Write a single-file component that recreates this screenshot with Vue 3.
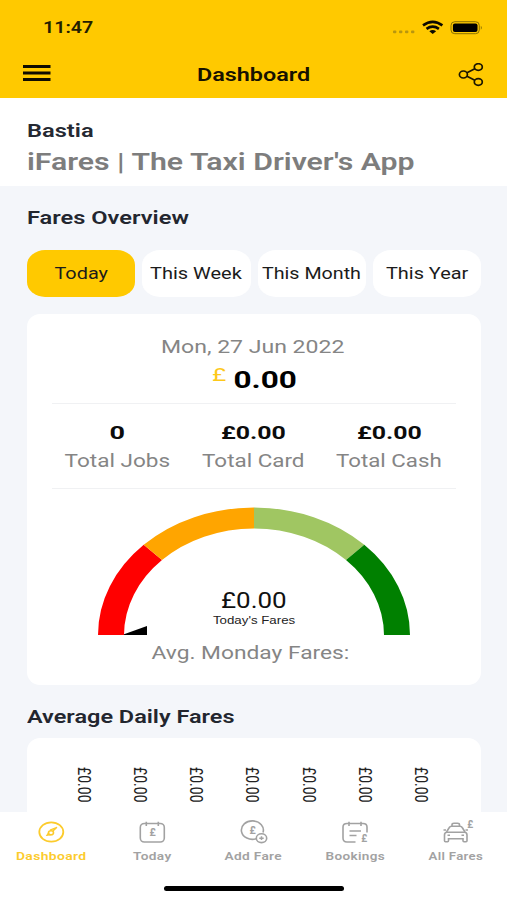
<script setup>
// Stretches a label along one axis so that it fills its design width.
const vFit = {
  mounted(el, { value, modifiers }) {
    if (modifiers.y) el.style.transform = `scaleY(${value / el.offsetHeight})`
    else el.style.transform = `scaleX(${value / el.offsetWidth})`
  },
}

const tabs = [
  { label: 'Today', width: 53, active: true },
  { label: 'This Week', width: 92 },
  { label: 'This Month', width: 99 },
  { label: 'This Year', width: 82 },
]

const totals = [
  { value: '0', label: 'Total Jobs', vw: 15, lw: 106 },
  { value: '£0.00', label: 'Total Card', vw: 65, lw: 103 },
  { value: '£0.00', label: 'Total Cash', vw: 65, lw: 106 },
]

const days = Array(7).fill('£0.00')

const nav = [
  { id: 'dashboard', label: 'Dashboard', width: 70, active: true },
  { id: 'today', label: 'Today', width: 38 },
  { id: 'add', label: 'Add Fare', width: 57 },
  { id: 'bookings', label: 'Bookings', width: 60 },
  { id: 'all', label: 'All Fares', width: 55 },
]
</script>

<template>
  <div class="screen">
    <header class="header">
      <div class="status">
        <span v-fit="50" class="t clock">11:47</span>
        <svg class="signals" width="92" height="16" viewBox="0 0 92 16">
          <g fill="#b8960f">
            <rect x="2" y="10.5" width="3.4" height="2.8" rx="1" />
            <rect x="8" y="10.5" width="3.4" height="2.8" rx="1" />
            <rect x="14" y="10.5" width="3.4" height="2.8" rx="1" />
            <rect x="20" y="10.5" width="3.4" height="2.8" rx="1" />
          </g>
          <g fill="none" stroke="#0c0a00" stroke-width="2.6">
            <path d="M32 5.400Q41.700 -1.700 51.400 5.400" />
            <path d="M35.500 8.900Q41.700 4.500 47.900 8.900" />
          </g>
          <path d="M38.300 11.200Q41.700 8.800 45.100 11.200L41.700 14Z" fill="#0c0a00" />
          <rect x="60" y="1.700" width="28.300" height="12" rx="3.800" fill="none" stroke="#8a7000" />
          <rect x="61.900" y="3.400" width="24.600" height="8.700" rx="2" fill="#000" />
          <path d="M89.800 5.700Q91.800 7.700 89.800 9.700Z" fill="#8a7000" />
        </svg>
      </div>
      <div class="titlebar">
        <svg class="menu" width="28" height="18" viewBox="0 0 28 18">
          <path d="M0 2.500H27.500M0 9H27.500M0 15.500H27.500" stroke="#0f0c00" stroke-width="3" />
        </svg>
        <h1 v-fit="113" class="t title">Dashboard</h1>
        <svg class="share" width="26" height="24" viewBox="0 0 26 24">
          <g fill="none" stroke="#1c1700" stroke-width="1.700">
            <ellipse cx="5.400" cy="11.500" rx="4" ry="3.500" />
            <ellipse cx="20.300" cy="4" rx="4" ry="3.300" />
            <ellipse cx="20.300" cy="19" rx="4" ry="3.300" />
            <path d="M9 9.800L16.800 5.800M9 13.300L16.800 17.200" />
          </g>
        </svg>
      </div>
    </header>

    <section class="intro">
      <div v-fit="67" class="t place">Bastia</div>
      <div v-fit="387" class="t app-name">iFares | The Taxi Driver's App</div>
    </section>

    <main class="content">
      <h2 v-fit="162" class="t heading overview">Fares Overview</h2>
      <div class="tabs">
        <button v-for="tab in tabs" :key="tab.label" class="tab" :class="{ active: tab.active }">
          <span v-fit="tab.width" class="t">{{ tab.label }}</span>
        </button>
      </div>

      <section class="card summary">
        <div class="date"><span v-fit="183" class="t">Mon, 27 Jun 2022</span></div>
        <div class="amount">
          <span v-fit="14" class="t currency">£</span>
          <span v-fit="63" class="t sum">0.00</span>
        </div>
        <div class="totals">
          <div v-for="item in totals" :key="item.label" class="total">
            <span v-fit="item.vw" class="t value">{{ item.value }}</span>
            <span v-fit="item.lw" class="t label">{{ item.label }}</span>
          </div>
        </div>
        <div class="gauge">
          <svg width="312" height="128" viewBox="0 0 312 128">
            <path d="M0 128A156 127.500 0 0 1 45.700 37.800L64 53.100A130 106.500 0 0 0 26 128Z" fill="#ff0000" />
            <path d="M45.700 37.800A156 127.500 0 0 1 156 .5V21.500A130 106.500 0 0 0 64 53.100Z" fill="#ffa500" />
            <path d="M156 .5A156 127.500 0 0 1 266.300 37.800L248 53.100A130 106.500 0 0 0 156 21.500Z" fill="#a0c662" />
            <path d="M266.300 37.800A156 127.500 0 0 1 312 128H286A130 106.500 0 0 0 248 53.100Z" fill="#008000" />
            <path d="M26 127.300L49 119V128H26Z" fill="#000" />
          </svg>
          <div class="reading">
            <span v-fit="66" class="t reading-value">£0.00</span>
            <span v-fit="82" class="t reading-label">Today's Fares</span>
          </div>
        </div>
        <div class="average"><span v-fit="198" class="t">Avg. Monday Fares:</span></div>
      </section>

      <h2 v-fit="208" class="t heading daily">Average Daily Fares</h2>
      <section class="card chart">
        <div v-for="(day, i) in days" :key="i" class="day">
          <span v-fit.y="36" class="t">{{ day }}</span>
        </div>
      </section>
    </main>

    <nav class="nav">
      <a v-for="item in nav" :key="item.id" class="nav-item" :class="{ active: item.active }">
        <svg width="36" height="26" viewBox="0 0 36 26" fill="none" stroke="currentColor" stroke-width="1.600">
          <template v-if="item.id === 'dashboard'">
            <ellipse cx="18.300" cy="14" rx="12" ry="9.700" stroke-width="1.800" />
            <ellipse cx="18" cy="14.700" rx="2.500" ry="2" />
            <path d="M24 9.300L19.700 13.300M24 9.300L17 12.200M16.300 16.200L14 17.300M18.500 16.700L14 17.300L15.700 14.500" stroke-width="1.300" />
          </template>
          <template v-else-if="item.id === 'today'">
            <rect x="6.300" y="5.500" width="24" height="18.500" rx="4" />
            <path d="M12.300 3.800V8M24.300 3.800V8" />
            <text x="18.500" y="18.300" class="pound" font-size="10.500">£</text>
          </template>
          <template v-else-if="item.id === 'add'">
            <path d="M21.300 20.700A11 9.200 0 1 1 28 14.500" />
            <text x="17.500" y="16.300" class="pound" font-size="10.500">£</text>
            <ellipse cx="26.500" cy="20.200" rx="5.200" ry="4.400" />
            <path d="M24.300 20.200H28.700M26.500 18.300V22.100" stroke-width="1.500" />
          </template>
          <template v-else-if="item.id === 'bookings'">
            <path d="M18.500 24H10Q6 24 6 20V9Q6 5.500 10 5.500H26Q30 5.500 30 9V14.500" />
            <path d="M12 3.800V8M24 3.800V8M12.500 13H24M12.500 17.500H19.500" />
            <text x="27.200" y="24" class="pound" font-size="10">£</text>
          </template>
          <template v-else>
            <path d="M8.500 14L11.300 9.500Q12 8.300 13.500 8.300H22Q23.500 8.300 24.200 9.500L27 14" />
            <path d="M14 8V6.800Q14 5.200 16 5.200H19.500Q21.500 5.200 21.500 6.800V8" />
            <path d="M5.500 12H8M27.500 12H30" />
            <path d="M9 14.200H26.500Q29 14.200 29 17V22.700Q29 23.700 28 23.700H26Q25 23.700 25 22.700V20.700H10.500V22.700Q10.500 23.700 9.500 23.700H7.500Q6.500 23.700 6.500 22.700V17Q6.500 14.200 9 14.200Z" />
            <path d="M9.500 17.300H12M23.500 17.300H26" />
            <text x="32.300" y="9.500" class="pound" font-size="10">£</text>
          </template>
        </svg>
        <span v-fit="item.width" class="t">{{ item.label }}</span>
      </a>
      <div class="home"></div>
    </nav>
  </div>
</template>

<style>
body {
  margin: 0;
}
</style>

<style scoped>
.screen {
  width: 507px;
  height: 900px;
  overflow: hidden;
  display: flex;
  flex-direction: column;
  background: #f4f6fa;
  font-family: Roboto, "Liberation Sans", sans-serif;
  color: #23262f;
}
.t {
  display: inline-block;
  width: max-content;
  white-space: nowrap;
}
h1,
h2 {
  margin: 0;
}
.header {
  height: 98px;
  flex: none;
  background: #ffc900;
}
.status {
  height: 55px;
  padding: 0 24px 0 43px;
  display: flex;
  align-items: center;
  justify-content: space-between;
}
.clock {
  transform-origin: left;
  font-size: 16.5px;
  font-weight: 600;
  color: #241d00;
}
.titlebar {
  height: 39px;
  padding: 0 23px;
  display: grid;
  grid-template-columns: 1fr auto 1fr;
  align-items: center;
}
.menu {
  margin-bottom: 4px;
}
.title {
  font-size: 18px;
  font-weight: 600;
  color: #171200;
}
.share {
  justify-self: end;
}
.intro {
  height: 65px;
  flex: none;
  padding: 20px 26px 3px;
  display: flex;
  flex-direction: column;
  background: #fff;
}
.place {
  margin-left: 0.5px;
  transform-origin: left;
  line-height: 25px;
  font-size: 18px;
  font-weight: 600;
  color: #252932;
}
.app-name {
  margin-left: 0.5px;
  transform-origin: left;
  line-height: 38px;
  font-size: 23.500px;
  font-weight: 600;
  color: #7d7d7d;
}
.content {
  flex: 1;
  min-height: 0;
  padding: 20px 26px 0 27px;
  overflow: hidden;
}
.heading {
  display: block;
  line-height: 24px;
  font-size: 17.500px;
  font-weight: 600;
  transform-origin: left;
}
.tabs {
  margin-top: 20px;
  display: grid;
  grid-template-columns: repeat(4, 1fr);
  gap: 7px;
}
.tab {
  height: 47px;
  padding: 0;
  border: 0;
  border-radius: 18px / 15px;
  display: flex;
  align-items: center;
  justify-content: center;
  background: #fff;
  font: 400 16.500px Roboto, sans-serif;
  color: #1b1b1b;
}
.tab.active {
  background: #ffc900;
}
.card {
  background: #fff;
  border-radius: 13px;
}
.summary {
  margin-top: 17px;
  height: 371px;
  padding: 21px 25px 0;
  box-sizing: border-box;
}
.date {
  padding-right: 2px;
  line-height: 25px;
  font-size: 18.500px;
  text-align: center;
  color: #858585;
}
.amount {
  height: 43px;
  padding-right: 6px;
  display: flex;
  align-items: flex-start;
  justify-content: center;
  gap: 18px;
  border-bottom: 1px solid #f0f1f3;
}
.currency {
  line-height: 30px;
  font-size: 17.500px;
  font-weight: 400;
  color: #fdc81a;
}
.sum {
  line-height: 41px;
  font-size: 23px;
  font-weight: 700;
  color: #000;
}
.totals {
  height: 85px;
  padding: 15px 2px 0 0;
  box-sizing: border-box;
  display: flex;
  justify-content: space-between;
  border-bottom: 1px solid #f0f1f3;
}
.total {
  width: 130px;
  display: flex;
  flex-direction: column;
  align-items: center;
}
.value {
  line-height: 28px;
  font-size: 18px;
  font-weight: 700;
  color: #0c0c0c;
}
.label {
  line-height: 28px;
  font-size: 18.500px;
  color: #858585;
}
.gauge {
  margin-top: 18px;
  height: 128px;
  display: grid;
  justify-items: center;
}
.gauge svg,
.reading {
  grid-area: 1 / 1;
}
.reading {
  align-self: end;
  height: 48px;
  display: flex;
  flex-direction: column;
  align-items: center;
}
.reading-value {
  line-height: 27px;
  font-size: 22px;
  color: #111;
}
.reading-label {
  line-height: 13px;
  font-family: "Liberation Sans", sans-serif;
  font-size: 11px;
  color: #222;
}
.average {
  padding-right: 8px;
  line-height: 36px;
  font-size: 18.500px;
  text-align: center;
  color: #858585;
}
.daily {
  margin-top: 20px;
}
.chart {
  margin-top: 9px;
  height: 160px;
  padding: 28px 32px 0 29px;
  box-sizing: border-box;
  display: grid;
  grid-template-columns: repeat(7, 1fr);
}
.day {
  height: 37px;
  display: flex;
  align-items: center;
  justify-content: center;
}
.day .t {
  width: auto;
  height: max-content;
  writing-mode: vertical-rl;
  line-height: 20px;
  font-size: 18px;
  color: #222;
}
.nav {
  height: 88px;
  flex: none;
  display: grid;
  grid-template-columns: repeat(5, 1fr);
  grid-template-rows: 74px 5px;
  background: #fff;
}
.nav-item {
  padding-top: 6px;
  display: flex;
  flex-direction: column;
  align-items: center;
  color: #a2a2a2;
}
.nav-item .t {
  margin-top: 3px;
  line-height: 18px;
  font-size: 11.500px;
  font-weight: 600;
  letter-spacing: 0.3px;
}
.nav-item.active {
  color: #fccb2c;
}
.pound {
  font-family: Roboto, sans-serif;
  font-weight: 700;
  text-anchor: middle;
  fill: currentColor;
  stroke: none;
}
.home {
  grid-column: 1 / -1;
  justify-self: center;
  width: 180px;
  height: 5px;
  border-radius: 3px;
  background: #000;
}
</style>
